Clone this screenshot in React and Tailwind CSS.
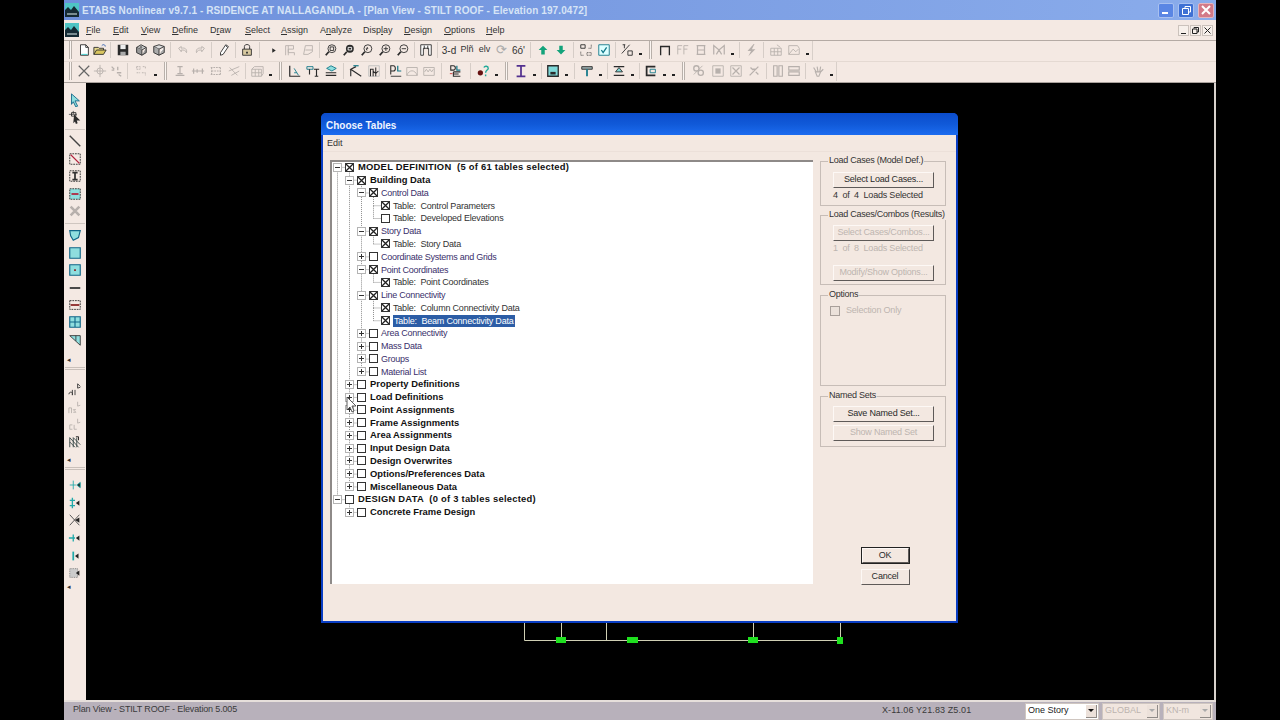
import React from 'react'

const GR = '#b7b0ac'
const K = '#2a2a2a'
const T = '#8fdede'

// toolbar glyphs, all on a 16x16 grid
const glyphs = {
  new: <><path d="M4 2h6l3 3v9H4z" fill="#fff" stroke={K} /><path d="M10 2v3h3" stroke={K} /><path d="M5 13h7" stroke="#3cc" /></>,
  open: <><path d="M1 13V5h5l1 1h5v2" stroke={K} fill="#e8d98a" /><path d="M1 13l3-5h11l-3 5z" fill="#d9c55f" stroke={K} /><path d="M10 3c2-2 4-1 4 1" stroke="#25a" /></>,
  save: <><path d="M2 2h12v12H2z" fill={K} /><path d="M5 2h6v5H5z" fill="#eee" /><path d="M5 10h6v4H5z" fill="#aaa" /></>,
  print: <><path d="M3 5l5-3 6 3-5 3z" fill="#ccc" stroke={K} /><path d="M3 5v6l6 3V8M14 5v6l-5 3" stroke={K} fill="#999" /><circle cx="8" cy="5" r="1.5" fill="#777" /></>,
  print2: <><path d="M2 4l6-2 6 2-6 3z" fill="#ddd" stroke={K} /><path d="M2 4v7l6 3V7M14 4v7l-6 3" stroke={K} fill="#aaa" /><path d="M10 9l3-2" stroke="#fff" /></>,
  undo: <path d="M3 6l3-2v2c4-1 7 1 6 5-1-3-3-3-6-3v2z" stroke={GR} />,
  redo: <path d="M13 6l-3-2v2C6 5 3 7 4 11c1-3 3-3 6-3v2z" stroke={GR} />,
  pencil: <><path d="M10 2l3 2-6 9-3 1 0-3z" fill="#fff" stroke={K} /><path d="M10 3l2 2" stroke={K} /></>,
  lock: <><path d="M5 7V4c0-3 6-3 6 0v3" stroke={K} /><path d="M3 7h10v7H3z" fill="#d8c9a0" stroke={K} /><path d="M7 10h2v2H7z" fill={K} /></>,
  tri: <path d="M6 6l4 2.5L6 11z" fill={K} />,
  frameG: <path d="M3 14V3h9v4H6v4h7v3M6 3v11" stroke={GR} />,
  frameG2: <path d="M3 13l2-10h8v7l-5 3zM5 8h8" stroke={GR} />,
  zw: <><circle cx="9" cy="6.5" r="4.5" stroke={K} /><path d="M5.5 10L2 14" stroke={K} strokeWidth="2" /><path d="M7 4.5h4v4H7z" stroke={K} /></>,
  zr: <><circle cx="9" cy="6.5" r="4.5" fill={K} /><path d="M5.5 10L2 14" stroke={K} strokeWidth="2" /><path d="M7 5h4v3H7z" stroke="#fff" /></>,
  zp: <><circle cx="9" cy="6.5" r="4.5" stroke={K} /><path d="M5.5 10L2 14" stroke={K} strokeWidth="2" /><path d="M7 6.5h2l-1-2M7 6.5l1 2" stroke={K} /></>,
  zi: <><circle cx="9" cy="6.5" r="4.5" stroke={K} /><path d="M5.5 10L2 14" stroke={K} strokeWidth="2" /><path d="M6.5 6.5h5M9 4v5" stroke={K} /></>,
  zo: <><circle cx="9" cy="6.5" r="4.5" stroke={K} /><path d="M5.5 10L2 14" stroke={K} strokeWidth="2" /><path d="M6.5 6.5h5" stroke={K} /></>,
  grid: <><path d="M2 2h12v12h-3V6H5v8H2z" fill="#fff" stroke={K} /><path d="M6 3v4M10 3v4" stroke={K} /></>,
  up: <path d="M8 3l5 5h-3v5H6V8H3z" fill="#13a37b" />,
  down: <path d="M8 13l5-5h-3V3H6v5H3z" fill="#13a37b" />,
  pick: <><path d="M2 2h5v4H2z" stroke={K} /><path d="M9 11h5v3H9z" stroke={K} strokeDasharray="1 1" /><path d="M2 10v4h4M14 2v4h-3" stroke={K} strokeDasharray="1 1" /></>,
  check: <><path d="M2 2h12v12H2z" fill="#dff" stroke="#178" /><path d="M5 8l2 3 4-6" stroke="#178" strokeWidth="1.5" /></>,
  pct: <><path d="M3 2h3M5 2v4M2 12L11 2" stroke={K} /><path d="M9 9h5v5H9z" stroke={K} /></>,
  arch: <path d="M3 14V4h10v10" stroke={K} strokeWidth="1.5" />,
  ff: <path d="M2 13V3h5M2 7h4M9 13V3h5M9 7h4" stroke={GR} />,
  bb: <path d="M3 3h10M3 13h10M4 3v10M12 3v10M4 8h8" stroke={GR} strokeWidth="1.4" />,
  mm: <path d="M2 13V3l6 5 6-5v10M5 13l3-5 3 5" stroke={GR} strokeWidth="1.4" />,
  bolt: <path d="M11 1L4 9h4l-3 6 8-8H9l3-6z" fill={GR} />,
  tbl: <><path d="M2 6h12v8H2z" stroke={GR} /><path d="M2 10h12M6 6v8M10 6v8M9 2l4 3" stroke={GR} /></>,
  mnt: <><path d="M2 13V3h10l2 3v7z" stroke={GR} /><path d="M2 13l5-6 3 3 3-3" stroke={GR} /></>,
  x: <path d="M2 2l12 12M14 2L2 14" stroke="#666" strokeWidth="1.4" />,
  tgt: <><circle cx="8" cy="8" r="3.5" stroke={GR} /><path d="M8 1v14M1 8h14" stroke={GR} /></>,
  dots: <path d="M3 3l3 3M3 7h3M10 3v4M9 10h5M11 12l3 2" stroke={GR} strokeWidth="1.5" />,
  dots2: <path d="M3 3h4v3H3zM10 3h3v3M3 10h4M9 10h4v3" stroke={GR} strokeDasharray="2 1" />,
  sup: <path d="M3 13h10M5 11h6M8 3v8M5 3h6" stroke={GR} strokeWidth="1.4" />,
  beam: <path d="M1 8h14M3 5v6M13 5v6M7 6v4" stroke={GR} strokeWidth="1.4" />,
  beam2: <path d="M2 4h12M2 12h12M3 4v8M13 4v8M3 8h10" stroke={GR} strokeDasharray="2 1" strokeWidth="1.3" />,
  star: <path d="M2 8l12-5M5 13L14 8M3 4l9 9" stroke={GR} />,
  wall: <path d="M2 6h11v8H2zM2 6l3-3h10v8l-2 3M2 10h11M6 6v8M10 6v8" stroke={GR} />,
  graph: <><path d="M2 2v12h12" stroke={K} strokeWidth="1.4" /><path d="M7 5l5 8M7 10h3" stroke="#178" /></>,
  ft: <><path d="M1 3h7v3H1z" stroke="#178" /><path d="M4 6v6M9 6h6M12 6v8M10 14h4" stroke={K} strokeWidth="1.3" /></>,
  slab: <><path d="M3 5l5-3 6 3-5 3z" fill="#8fdede" stroke="#178" /><path d="M2 10h12M2 13h12" stroke={K} strokeWidth="1.4" /></>,
  col1: <><path d="M2 14V6M8 3L2 6l12 8" stroke={K} strokeWidth="1.3" /><path d="M5 2h6" stroke="#178" strokeWidth="1.4" /></>,
  col2: <><path d="M2 2h12v12H2z" stroke="#bbb" /><path d="M4 14V6h3v8M10 14V4M7 8l3 3 3-3" stroke={K} strokeWidth="1.2" /></>,
  dl: <><path d="M2 2h3c3 0 3 6 0 6H2zM2 2v10" stroke={K} strokeWidth="1.2" /><path d="M10 2v6h4" stroke="#178" strokeWidth="1.4" /><path d="M2 14h12" stroke={K} /></>,
  env: <><path d="M2 13V4h12v9z" stroke={GR} /><path d="M2 13c3-7 9-7 12 0" stroke={GR} /></>,
  mom: <><path d="M2 4h12v9H2z" stroke={GR} /><path d="M3 9l2-3 2 3 2-3 2 3 2-3" stroke={GR} /></>,
  dle: <><path d="M2 2h3c3 0 3 5 0 5H2zM2 2v5" stroke={K} strokeWidth="1.2" /><path d="M9 2v5h4" stroke="#178" strokeWidth="1.4" /><path d="M5 9h8M5 9v5h8M5 11.5h6" stroke={K} strokeWidth="1.2" /><path d="M1 11h3" stroke="#c33" /></>,
  ball: <><circle cx="5" cy="10" r="3" fill="#611" /><path d="M9 4c1-2 5-2 5 1 0 2-3 2-3 5M11 12v2" stroke="#2a9" strokeWidth="1.6" /></>,
  ibeam: <path d="M3 2h10M3 14h10M8 2v12" stroke="#52308f" strokeWidth="2" />,
  box: <><path d="M2 2h12v12H2z" fill="#7fd8d8" stroke={K} strokeWidth="1.5" /><path d="M5 9h6v3H5z" fill={K} /></>,
  tee: <><path d="M2 3h12v3H2z" fill="#9aa" stroke={K} /><path d="M8 6v8" stroke="#178" strokeWidth="2" /></>,
  zee: <><path d="M2 3h12M2 13h12" stroke={K} strokeWidth="1.6" /><path d="M4 9l4-5 4 5z" fill="#7fd8d8" stroke={K} /></>,
  cee: <><path d="M13 3H3v10h10" stroke={K} strokeWidth="2" /><path d="M7 6h6v4H7z" stroke="#178" /></>,
  h1: <><circle cx="5" cy="5" r="3" stroke={GR} strokeWidth="1.5" /><circle cx="10" cy="10" r="3" stroke={GR} strokeWidth="1.5" /><path d="M2 12l10-10" stroke={GR} /></>,
  h2: <><path d="M2 2h12v12H2z" stroke={GR} /><path d="M5 5h6v6H5z" fill={GR} /></>,
  h3: <><path d="M2 2h12v12H2z" stroke={GR} /><path d="M4 4l8 8M12 4l-8 8" stroke={GR} strokeWidth="1.4" /></>,
  h4: <path d="M3 13l10-10M6 6h4M4 4l3 3M10 9l3 3" stroke={GR} strokeWidth="1.5" />,
  bars: <path d="M3 2h4v12H3zM9 2h4v12H9z" stroke={GR} strokeWidth="1.3" />,
  hbars: <path d="M2 3h12v4H2zM2 9h12v4H2z" stroke={GR} strokeWidth="1.3" />,
  hand: <path d="M3 4l3 5M7 3l1 6M11 3l-1 6M14 6l-4 4M5 9h6l-2 5H7z" stroke={GR} strokeWidth="1.3" />,
  // left bar
  arrow: <path d="M4 1l9 8H8l3 6-2 1-3-6-2 3z" fill="#8fdede" stroke="#168" />,
  ptr: <><path d="M1 5h9M6 1v4" stroke="#555" /><path d="M7 5l7 7h-4l1 3-2 1-1-3-2 2z" fill={K} /><path d="M4 3h5v4H4z" stroke={K} /></>,
  line: <path d="M2 2l12 12" stroke="#444" strokeWidth="1.6" />,
  dline: <><path d="M2 2h12v12H2z" stroke={K} strokeDasharray="2 1" /><path d="M3 3l10 10" stroke="#b2223c" strokeWidth="1.6" /></>,
  ib: <><path d="M2 2h12v12H2z" stroke={K} strokeDasharray="2 1" /><path d="M5 4h6M5 12h6M8 4v8" stroke="#333" strokeWidth="2" /></>,
  fb: <><path d="M2 2h12v12H2z" fill={T} stroke={K} strokeDasharray="2 1" /><path d="M4 8h8" stroke="#b2223c" strokeWidth="2" /></>,
  xx: <path d="M3 3l10 10M13 3L3 13" stroke={GR} strokeWidth="3" />,
  poly: <path d="M2 3h12l-2 8-6 3-3-5z" fill={T} stroke="#168" strokeWidth="1.3" />,
  rect: <path d="M2 2h12v12H2z" fill={T} stroke="#168" strokeWidth="1.3" />,
  rectd: <><path d="M2 2h12v12H2z" fill={T} stroke="#168" strokeWidth="1.3" /><path d="M7 7h2v2H7z" fill="#822" /></>,
  wl: <path d="M2 7h12v2H2z" fill="#333" />,
  dwl: <><path d="M2 3h12v10H2z" stroke={K} strokeDasharray="2 1" /><path d="M3 8h10" stroke="#822" strokeWidth="2" /></>,
  cross: <path d="M2 2h12v12H2zM8 2v12M2 8h12" fill={T} stroke="#168" strokeWidth="1.3" />,
  wedge: <><path d="M2 3h12v11z" fill={T} stroke="#333" /><path d="M9 3v6" stroke="#333" /></>,
  all: <><path d="M1 14c0-3 4-3 4-1v2M5 9v6M8 9v6" stroke="#333" /><path d="M11 2v5l3-1M11 2l3 3" stroke="#333" /></>,
  ps: <><path d="M1 9h3v6M1 9v6M6 14h3l-3-3h3" stroke={GR} /><path d="M11 2v5l3-1" stroke={GR} /></>,
  clr: <><path d="M5 9H2v5h3M7 9v5h3" stroke={GR} /><path d="M11 2v5l3-1" stroke={GR} /></>,
  hatch: <><path d="M2 3l10 11M2 8l6 6M6 3l8 8M2 3v11M6 3v11M10 3v11" stroke="#344" /><path d="M9 2h3v4" stroke="#111" /></>,
  tgl1: <path d="M2 8h7M6 3v10M10 8l4-3v6z" stroke="#2aa" fill="#222" />,
  tgl2: <><path d="M5 2v12M2 5h6M2 11h6" stroke="#2aa" strokeWidth="1.5" /><path d="M9 8l4-3v6z" fill="#222" /></>,
  tgl3: <><path d="M2 2l11 12M2 14L13 2" stroke="#444" /><path d="M8 8l5-3v6z" fill="#222" /></>,
  tgl4: <><path d="M1 8h7M6 4v8" stroke="#2aa" strokeWidth="1.5" /><path d="M9 8l4-3v6z" fill="#222" /></>,
  tgl5: <><path d="M6 3v10" stroke="#2aa" strokeWidth="2" /><path d="M8 8l4-3v6z" fill="#222" /></>,
  tgl6: <><path d="M2 3h9v10H2z" fill="#ccc" stroke="#777" strokeDasharray="1 1" /><path d="M9 8l4-3v6z" fill="#222" /></>,
}

function Icon({ n, size = 16 }) {
  return <svg width={size} height={size} viewBox="0 0 16 16" fill="none">{glyphs[n]}</svg>
}

function B({ n, w = 'w-[18px]' }) {
  return <div className={`${w} h-[18px] flex items-center justify-center shrink-0`}><Icon n={n} size={14} /></div>
}

function Sep({ narrow }) {
  return <div className={`w-[1px] h-[16px] ${narrow ? 'mx-[2px]' : 'mx-[3px]'} bg-[#d6cdc7] shrink-0`} />
}

function Grip() {
  return <div className="w-[3px] h-[18px] mx-[4px] border-x border-[#b8b0aa] bg-[#fbf5f1] shrink-0" />
}

function Drop() {
  return <div className="w-[9px] h-[18px] flex items-end justify-center pb-[4px] shrink-0"><div className="w-[3px] h-[2px] bg-[#222]" /></div>
}

function ToolbarOne() {
  return (
    <div className="h-[21px] flex items-center border-t border-[#b4aaa4] pl-[1px] pb-[2px]">
      <Grip />
      <B n="new" w="w-[16px]" /><B n="open" w="w-[15px]" />
      <Sep />
      <B n="save" /><B n="print" /><B n="print2" w="w-[17px]" />
      <Sep />
      <B n="undo" w="w-[17px]" /><B n="redo" w="w-[17px]" />
      <Sep />
      <B n="pencil" />
      <Sep narrow />
      <B n="lock" />
      <Sep />
      <div className="w-[4px] shrink-0" />
      <B n="tri" w="w-[14px]" /><B n="frameG" /><B n="frameG2" />
      <Sep narrow />
      <B n="zw" /><B n="zr" /><B n="zp" /><B n="zi" /><B n="zo" />
      <Sep narrow />
      <B n="grid" />
      <Sep narrow />
      <span className="w-[18px] text-center text-[10px] text-[#333] shrink-0">3-d</span>
      <span className="w-[18px] text-center text-[9px] text-[#333] shrink-0">Plñ</span>
      <span className="w-[17px] text-center text-[9px] text-[#333] shrink-0">elv</span>
      <span className="w-[17px] text-center text-[13px] text-[#aaa] shrink-0">⟳</span>
      <span className="w-[17px] text-center text-[10px] text-[#333] shrink-0">6ó'</span>
      <Sep />
      <B n="up" /><B n="down" />
      <Sep />
      <B n="pick" /><B n="check" />
      <Sep narrow />
      <B n="pct" /><Drop />
      <Grip />
      <B n="arch" /><B n="ff" /><B n="bb" /><B n="mm" /><Drop />
      <Sep narrow />
      <B n="bolt" />
      <Sep />
      <B n="tbl" /><B n="mnt" /><Drop />
      <div className="h-[19px] border-r border-[#d8cfc9]" />
    </div>
  )
}

function ToolbarTwo() {
  return (
    <div className="h-[21px] flex items-center border-t border-[#e4d9d2] pl-[1px] pb-[2px]">
      <Grip />
      <B n="x" w="w-[16px]" /><B n="tgt" w="w-[16px]" /><B n="dots" w="w-[16px]" />
      <Sep />
      <B n="dots2" w="w-[20px]" /><Drop />
      <Grip />
      <B n="sup" /><B n="beam" /><B n="beam2" /><B n="star" />
      <Sep narrow />
      <B n="wall" /><Drop />
      <Grip />
      <B n="graph" /><B n="ft" /><B n="slab" />
      <Sep />
      <B n="col1" /><B n="col2" />
      <Sep narrow />
      <B n="dl" w="w-[16px]" /><B n="env" w="w-[16px]" /><B n="mom" />
      <Sep />
      <B n="dle" w="w-[22px]" />
      <Sep />
      <B n="ball" /><Drop />
      <Grip />
      <B n="ibeam" /><Drop />
      <Sep narrow />
      <B n="box" /><Drop />
      <Sep />
      <B n="tee" /><Drop />
      <Sep narrow />
      <B n="zee" /><Drop />
      <Sep narrow />
      <B n="cee" /><Drop /><Drop />
      <Grip />
      <B n="h1" w="w-[20px]" /><B n="h2" /><B n="h3" /><B n="h4" />
      <Sep />
      <B n="bars" w="w-[16px]" /><B n="hbars" w="w-[16px]" />
      <Sep />
      <B n="hand" /><Drop />
      <div className="h-[19px] border-r border-[#d8cfc9]" />
    </div>
  )
}

const sideOne = ['arrow', 'ptr', '-', 'line', 'dline', 'ib', 'fb', 'xx', '-', 'poly', 'rect', 'rectd', 'wl', 'dwl', 'cross', 'wedge']
const sideTwo = ['all', 'ps', 'clr', 'hatch']
const sideThree = ['tgl1', 'tgl2', 'tgl3', 'tgl4', 'tgl5', 'tgl6']

function SideBar() {
  return (
    <div className="w-[22px] bg-[#f4e9e3] flex flex-col items-center shrink-0 pt-[8px]">
      {sideOne.map((n, i) => n === '-'
        ? <div key={i} className="w-[20px] h-[1px] my-[3px] bg-[#cfc6c0]" />
        : <div key={i} className="h-[17.4px] flex items-center"><Icon n={n} size={14} /></div>)}
      <span className="text-[7px] leading-[14px] h-[14px] mt-[5px] text-[#333] self-start pl-[3px]">◂</span>
      <div className="w-[20px] h-[3px] mb-[10px] border-y border-[#c9c0ba]" />
      {sideTwo.map((n, i) => <div key={i} className="h-[17.5px] flex items-center"><Icon n={n} size={14} /></div>)}
      <span className="text-[7px] leading-[14px] h-[14px] mt-[3px] text-[#333] self-start pl-[3px]">◂</span>
      <div className="w-[20px] h-[3px] mb-[6px] border-y border-[#c9c0ba]" />
      {sideThree.map((n, i) => <div key={i} className="h-[17.6px] flex items-center"><Icon n={n} size={14} /></div>)}
      <span className="text-[7px] leading-[14px] h-[12px] -mt-[2px] text-[#333] self-start pl-[3px]">◂</span>
    </div>
  )
}

const menu = [
  ['', 'F', 'ile', 'w-[27px]'],
  ['', 'E', 'dit', 'w-[28px]'],
  ['', 'V', 'iew', 'w-[31px]'],
  ['', 'D', 'efine', 'w-[38px]'],
  ['D', 'r', 'aw', 'w-[35px]'],
  ['', 'S', 'elect', 'w-[36px]'],
  ['', 'A', 'ssign', 'w-[39px]'],
  ['A', 'n', 'alyze', 'w-[43px]'],
  ['Disp', 'l', 'ay', 'w-[41px]'],
  ['', 'D', 'esign', 'w-[40px]'],
  ['', 'O', 'ptions', 'w-[42px]'],
  ['', 'H', 'elp', 'w-[30px]'],
]

const rows = [
  [0, '-', true, 'MODEL DEFINITION  (5 of 61 tables selected)'],
  [1, '-', true, 'Building Data'],
  [2, '-', true, 'Control Data'],
  [3, '', true, 'Table:  Control Parameters'],
  [3, '', false, 'Table:  Developed Elevations'],
  [2, '-', true, 'Story Data'],
  [3, '', true, 'Table:  Story Data'],
  [2, '+', false, 'Coordinate Systems and Grids'],
  [2, '-', true, 'Point Coordinates'],
  [3, '', true, 'Table:  Point Coordinates'],
  [2, '-', true, 'Line Connectivity'],
  [3, '', true, 'Table:  Column Connectivity Data'],
  [3, '', true, 'Table:  Beam Connectivity Data', true],
  [2, '+', false, 'Area Connectivity'],
  [2, '+', false, 'Mass Data'],
  [2, '+', false, 'Groups'],
  [2, '+', false, 'Material List'],
  [1, '+', false, 'Property Definitions'],
  [1, '+', false, 'Load Definitions'],
  [1, '+', false, 'Point Assignments'],
  [1, '+', false, 'Frame Assignments'],
  [1, '+', false, 'Area Assignments'],
  [1, '+', false, 'Input Design Data'],
  [1, '+', false, 'Design Overwrites'],
  [1, '+', false, 'Options/Preferences Data'],
  [1, '+', false, 'Miscellaneous Data'],
  [0, '-', false, 'DESIGN DATA  (0 of 3 tables selected)'],
  [1, '+', false, 'Concrete Frame Design'],
]

const PITCH = 12.78
const indent = ['pl-[1px]', 'pl-[13px]', 'pl-[25px]', 'pl-[37px]']
const textCls = [
  'ml-[4px] font-bold text-[#111] text-[9.4px] tracking-[0.25px]',
  'ml-[4px] font-bold text-[#111] text-[9.4px] tracking-[0px]',
  'ml-[3px] text-[#3a2f6b] text-[9px] tracking-[-0.25px]',
  'ml-[3px] text-[#333] text-[9px] tracking-[-0.2px]',
]

// dotted connectors of the tree, worked out from the row list
function treeLines() {
  const last = {}
  let d = ''
  rows.forEach((r, i) => {
    const l = r[0]
    const y = 5.4 + i * PITCH
    const x = 5.5 + l * 12
    const prev = Math.max(last[l] ?? -1, last[l - 1] ?? -1)
    if (prev >= 0) d += `M${x} ${prev}V${y}`
    d += `M${x} ${y}H${x + 8}`
    last[l] = y
  })
  return d
}

function Expander({ kind }) {
  if (!kind) return <div className="w-[9px] h-[9px] shrink-0" />
  return (
    <div className="relative w-[9px] h-[9px] border border-[#b4b4b4] bg-white shrink-0">
      <div className="absolute left-[1px] top-[3px] w-[5px] h-[1px] bg-[#333]" />
      {kind === '+' && <div className="absolute left-[3px] top-[1px] w-[1px] h-[5px] bg-[#333]" />}
    </div>
  )
}

function Check({ on, disabled }) {
  return (
    <div className={disabled ? 'w-[10px] h-[10px] border border-[#a89f9a] bg-[#ebe1da] shrink-0' : 'relative w-[9px] h-[9px] border border-[#333] bg-white shrink-0'}>
      {on ? <svg width="7" height="7" viewBox="0 0 7 7" className="block"><path d="M0 0l7 7M7 0L0 7" stroke="#222" strokeWidth="1.3" /></svg> : null}
    </div>
  )
}

function Tree() {
  return (
    <div className="relative w-[483px] h-[424px] bg-white border-t-2 border-l-2 border-t-[#8e8a88] border-l-[#8e8a88] overflow-hidden">
      <svg className="absolute left-0 top-0" width="100" height="420">
        <path d={treeLines()} stroke="#8f8f8f" strokeDasharray="1 1" fill="none" />
      </svg>
      <div className="-mt-[1px]">
        {rows.map((r, i) => (
          <div key={i} className={`relative flex items-center h-[12.78px] ${indent[r[0]]}`}>
            <Expander kind={r[1]} />
            <div className="w-[3px] shrink-0" />
            <Check on={r[2]} />
            <span className={`${textCls[r[0]]} whitespace-pre leading-[12px] ${r[4] ? 'bg-[#2c5da6] !text-white px-[1px]' : ''}`}>{r[3]}</span>
          </div>
        ))}
      </div>
    </div>
  )
}

function WinBtn({ children, off, def, cls = 'w-[101px] h-[16px]' }) {
  return (
    <div className={`${cls} flex items-center justify-center whitespace-nowrap text-[9px] tracking-[-0.2px] bg-[#f3e8e1] border border-t-[#fdf8f5] border-l-[#fdf8f5] border-r-[#5e5a58] border-b-[#5e5a58] ${off ? 'text-[#bdb5b0]' : 'text-[#2a2a2a]'} ${def ? 'outline outline-1 outline-[#222]' : ''}`}>
      {children}
    </div>
  )
}

function Group({ title, cls, children }) {
  return (
    <div className={`relative w-[126px] border border-[#c7bdb7] ${cls}`}>
      <span className="absolute left-[7px] -top-[8px] bg-[#f3e8e1] px-[1px] text-[9px] tracking-[-0.25px] leading-[12px] text-[#333] whitespace-nowrap">{title}</span>
      {children}
    </div>
  )
}

function Dialog() {
  return (
    <div className="absolute left-[321px] top-[113px] w-[637px] h-[510px] flex flex-col rounded-t-[5px] bg-[#0a3ec4] p-[2px] pt-0 z-10" style={{ fontFamily: '"Liberation Sans", Arial, sans-serif' }}>
      <div className="h-[22px] flex items-center pl-[5px] pt-[3px] -mx-[2px] rounded-t-[5px] bg-gradient-to-b from-[#0b4ccc] via-[#1059d8] to-[#1c6cf0]">
        <span className="text-[10px] font-bold text-[#eef4ff]">Choose Tables</span>
      </div>
      <div className="flex-1 flex flex-col bg-[#f3e8e1]">
        <div className="h-[17px] flex items-center pl-[4px] pt-[2px] text-[9px] text-[#333] border-b border-[#ece0d9]">Edit</div>
        <div className="flex-1 flex pl-[7px] pt-[8px]">
          <Tree />
          <div className="w-[126px] ml-[7px] flex flex-col items-center">
            <div className="h-[1px]" />
            <Group title="Load Cases (Model Def.)" cls="h-[45px] pl-[12px] pt-[10px]">
              <WinBtn>Select Load Cases...</WinBtn>
              <div className="text-[9px] tracking-[-0.2px] leading-[13px] mt-[1px] text-[#333] whitespace-pre">4  of  4  Loads Selected</div>
            </Group>
            <div className="h-[9px]" />
            <Group title="Load Cases/Combos (Results)" cls="h-[70px] pl-[12px] pt-[9px]">
              <WinBtn off>Select Cases/Combos...</WinBtn>
              <div className="text-[9px] tracking-[-0.2px] leading-[13px] mt-[1px] text-[#bdb5b0] whitespace-pre">1  of  8  Loads Selected</div>
              <div className="h-[10px]" />
              <WinBtn off>Modify/Show Options...</WinBtn>
            </Group>
            <div className="h-[10px]" />
            <Group title="Options" cls="h-[91px] pl-[9px] pt-[8px]">
              <div className="flex items-center">
                <Check disabled />
                <span className="ml-[6px] text-[9px] tracking-[-0.2px] text-[#bdb5b0]">Selection Only</span>
              </div>
            </Group>
            <div className="h-[10px]" />
            <Group title="Named Sets" cls="h-[51px] pl-[12px] pt-[9px]">
              <WinBtn>Save Named Set...</WinBtn>
              <div className="h-[3px]" />
              <WinBtn off>Show Named Set</WinBtn>
            </Group>
            <div className="h-[101px]" />
            <WinBtn def cls="w-[47px] h-[15px] ml-[4px]">OK</WinBtn>
            <div className="h-[6px]" />
            <WinBtn cls="w-[49px] h-[16px] ml-[4px]">Cancel</WinBtn>
          </div>
        </div>
      </div>
    </div>
  )
}

function Combo({ label, off, cls }) {
  return (
    <div className={`${cls} h-[17px] flex items-center justify-between pl-[2px] pr-[1px] border border-[#cfc6c0] ${off ? 'bg-[#f1e6df] text-[#bcb4af]' : 'bg-white text-[#222]'}`}>
      <span className="text-[9px]">{label}</span>
      <div className="w-[11px] h-[13px] flex items-center justify-center bg-[#ece1da] border-r border-b border-[#8f8a87]">
        <div className={off ? 'w-0 h-0 border-x-[3px] border-t-[3px] border-x-transparent border-t-[#aaa]' : 'w-0 h-0 border-x-[3px] border-t-[3px] border-x-transparent border-t-[#111]'} />
      </div>
    </div>
  )
}

function AppLogo({ cls }) {
  return (
    <svg className={cls} width="14" height="14" viewBox="0 0 14 14">
      <path d="M0 0h14v14H0z" fill="#4ec4c4" />
      <path d="M0 14V7l3-3 3 3 3-4 5 6v5z" fill="#152a34" />
      <path d="M2 11h10" stroke="#dfeeee" />
    </svg>
  )
}

export default function App() {
  return (
    <div className="relative w-[1280px] h-[720px] bg-black overflow-hidden px-[64px]" style={{ fontFamily: '"Liberation Sans", Arial, sans-serif' }}>
      <div className="w-[1152px] h-[720px] flex flex-col bg-[#f4e9e3]">
        {/* title bar */}
        <div className="h-[20px] flex items-center bg-gradient-to-r from-[#6d8fdb] to-[#8aaceb] shrink-0">
          <AppLogo cls="ml-[1px] shrink-0" />
          <span className="ml-[3px] text-[10px] font-bold tracking-[0.11px] text-[#d6e4f6] whitespace-nowrap">ETABS Nonlinear v9.7.1 - RSIDENCE AT NALLAGANDLA - [Plan View - STILT ROOF - Elevation 197.0472]</span>
          <div className="ml-auto flex gap-[4px] pr-[2px]">
            <div className="w-[16px] h-[15px] flex items-end pl-[3px] pb-[3px] rounded-[2px] bg-[#5a86e4] border border-[#a8c0f0]"><div className="w-[6px] h-[2px] bg-white" /></div>
            <div className="w-[16px] h-[15px] flex items-center justify-center rounded-[2px] bg-[#3e70d4] border border-[#a8c0f0]"><svg width="9" height="9" viewBox="0 0 9 9" fill="none"><path d="M3 2V0.5h5.5V6H7M0.5 2.5H6.5V8.5H0.5z" stroke="#fff" /></svg></div>
            <div className="w-[16px] h-[15px] flex items-center justify-center rounded-[2px] bg-[#d27a88] border border-[#e4b4bc]"><svg width="10" height="10" viewBox="0 0 10 10"><path d="M1 1l8 8M9 1L1 9" stroke="#fff" strokeWidth="2" /></svg></div>
          </div>
        </div>

        {/* menu */}
        <div className="h-[20px] flex items-center shrink-0 text-[9px] text-[#333]">
          <AppLogo cls="ml-[1px] mr-[7px] shrink-0" />
          {menu.map((m, i) => (
            <span key={i} className={`${m[3]} shrink-0 pt-[2px]`}>{m[0]}<span className="underline">{m[1]}</span>{m[2]}</span>
          ))}
          <div className="ml-auto flex gap-[1px] pr-[3px]">
            <div className="w-[11px] h-[11px] flex items-end justify-center pb-[1px] bg-[#f7f0eb] border border-[#cbc2bc]"><div className="w-[5px] h-[1px] bg-[#222]" /></div>
            <div className="w-[11px] h-[11px] flex items-center justify-center bg-[#f7f0eb] border border-[#cbc2bc]"><svg width="7" height="7" viewBox="0 0 7 7" fill="none"><path d="M2 1.5V.5h4.5V5H5M.5 2H5v4.5H.5z" stroke="#222" /></svg></div>
            <div className="w-[11px] h-[11px] flex items-center justify-center bg-[#f7f0eb] border border-[#cbc2bc]"><svg width="7" height="7" viewBox="0 0 7 7"><path d="M.5.5l6 6M6.5.5l-6 6" stroke="#222" /></svg></div>
          </div>
        </div>

        <ToolbarOne />
        <ToolbarTwo />

        <div className="flex-1 flex min-h-0 border-t border-[#a9a19c]">
          <SideBar />
          <div className="flex-1 bg-black border-r-2 border-[#d9d2cd]" />
        </div>

        {/* status bar */}
        <div className="h-[20px] flex items-center shrink-0 bg-[#b8b1bb] border-t-2 border-[#e6dfdb] text-[9px] text-[#3a3a3a]">
          <span className="ml-[9px] w-[809px] shrink-0 pb-[3px] tracking-[-0.15px]">Plan View - STILT ROOF - Elevation 5.005</span>
          <span className="w-[143px] shrink-0 tracking-[0.1px]">X-11.06 Y21.83 Z5.01</span>
          <Combo label="One Story" cls="w-[74px]" />
          <div className="w-[3px] shrink-0" />
          <Combo label="GLOBAL" off cls="w-[58px]" />
          <div className="w-[3px] shrink-0" />
          <Combo label="KN-m" off cls="w-[50px]" />
        </div>
      </div>

      <Dialog />

      {/* part of the plan that shows under the dialog */}
      <svg className="absolute left-[500px] top-[618px]" width="360" height="30">
        <path d="M24.5 4v18.5H340.5M61.5 4v18M106.5 4v18M253.5 4v18M340.5 4v18" stroke="#cfcfb4" fill="none" />
        <path d="M56 19h10v6H56zM127 19h11v6h-11zM248 19h10v6h-10zM337 19h6v7h-6z" fill="#1fe01f" />
      </svg>

      {/* mouse pointer over the tree */}
      <svg className="absolute left-[346px] top-[396px] z-20" width="12" height="18" viewBox="0 0 12 18">
        <path d="M1 1v13l3-3 2 5 2-1-2-5h4z" fill="#fff" stroke="#333" strokeWidth="0.8" />
      </svg>
    </div>
  )
}
